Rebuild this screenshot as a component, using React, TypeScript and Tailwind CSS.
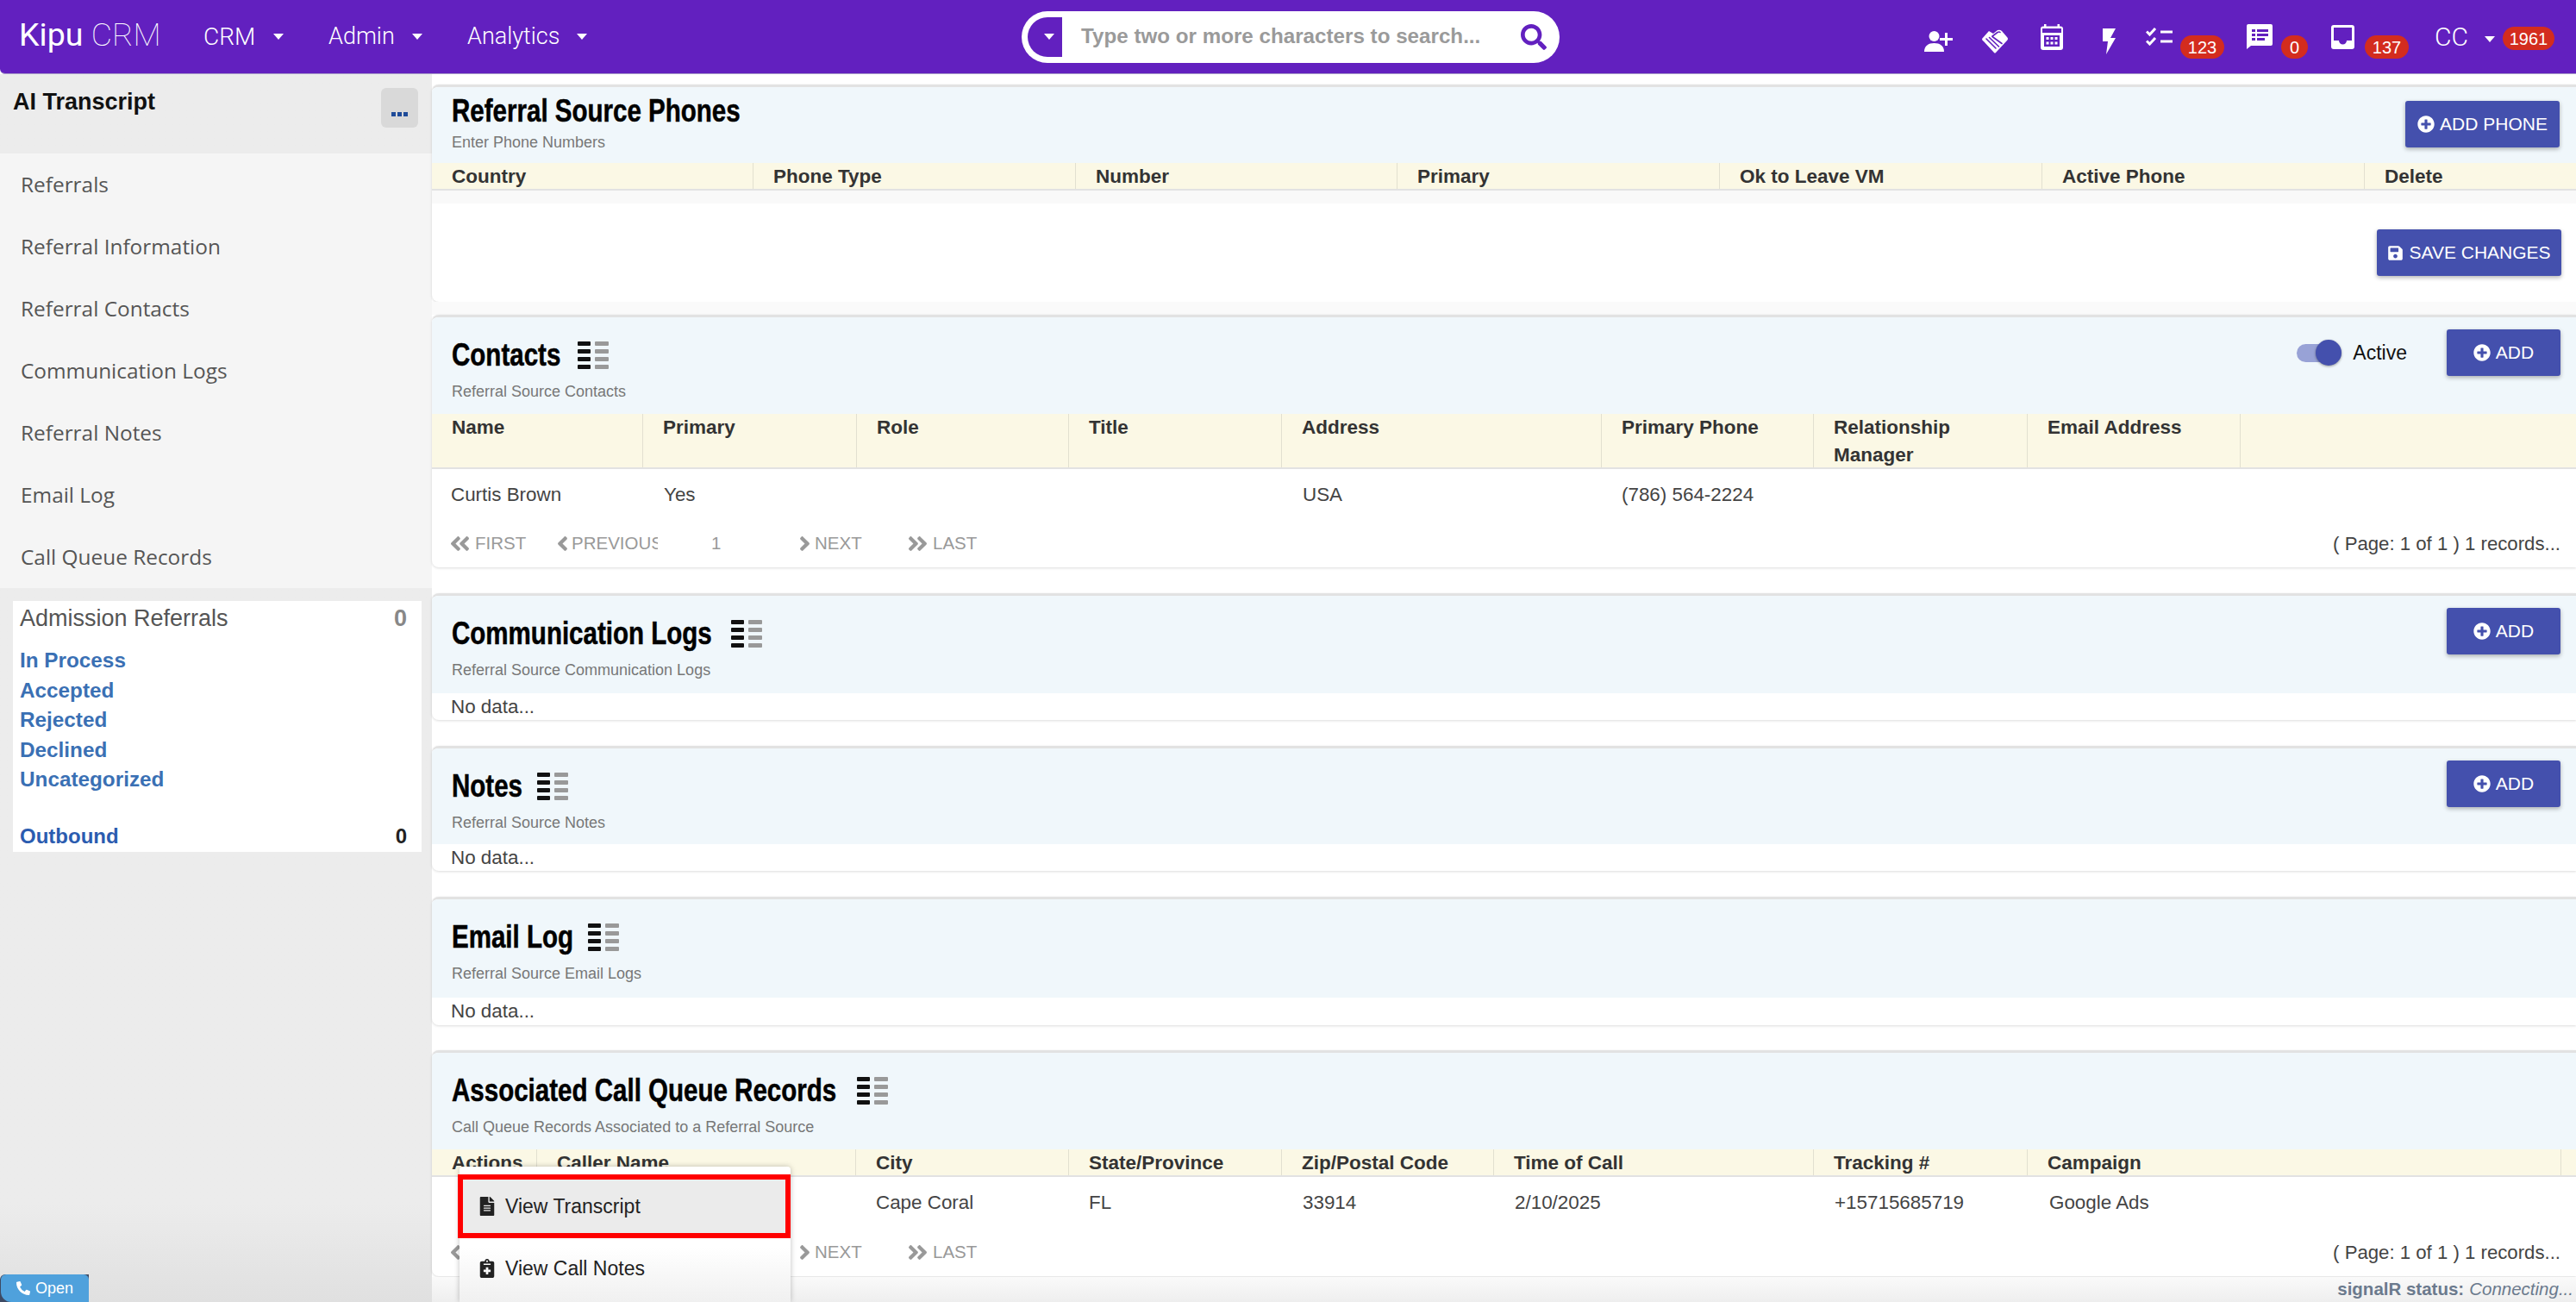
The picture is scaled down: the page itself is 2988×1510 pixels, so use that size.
import React from "react";
import {
  FaAngleDoubleLeft,
  FaAngleDoubleRight,
  FaAngleLeft,
  FaAngleRight,
  FaFileAlt,
  FaNotesMedical,
  FaPhoneAlt,
  FaPlusCircle,
  FaSave,
  FaSearch,
} from "react-icons/fa";

const Caret = () => (
  <span className="inline-block h-0 w-0 border-x-[6px] border-t-[7px] border-x-transparent border-t-white" />
);

const Badge = ({ text, className }: { text: string; className: string }) => (
  <span
    className={`flex h-[27px] items-center justify-center rounded-full bg-[#d32c1e] text-[20px] font-medium text-white ${className}`}
  >
    {text}
  </span>
);

const ListIcon = () => (
  <svg width="36" height="32" viewBox="0 0 36 32" className="ml-[17px]">
    {[0, 9, 18, 27].map((y) => (
      <g key={y}>
        <rect x="0" y={y} width="15" height="5" rx="1" fill="#111" />
        <rect x="20" y={y} width="16" height="5" rx="1" fill="#999" />
      </g>
    ))}
  </svg>
);

const AddButton = ({ label, className }: { label: string; className: string }) => (
  <button
    className={`flex h-[54px] items-center justify-center gap-[6px] rounded-[3px] bg-[#4450ad] text-[21px] font-medium text-white shadow-[0_2px_5px_rgba(0,0,0,0.3)] ${className}`}
  >
    <FaPlusCircle className="text-[20px]" />
    {label}
  </button>
);

const Pager = () => (
  <div className="flex h-[55px] items-center pr-[18px] pl-[22px] text-[20.5px] text-[#999]">
    <span className="flex w-[122px] items-center">
      <span className="w-[28px]">
        <FaAngleDoubleLeft className="-ml-[3px] text-[27px]" />
      </span>
      FIRST
    </span>
    <span className="flex w-[118px] items-center overflow-hidden whitespace-nowrap">
      <span className="w-[18px] shrink-0">
        <FaAngleLeft className="-ml-[6px] text-[27px]" />
      </span>
      PREVIOUS
    </span>
    <span className="ml-[62px] w-[100px]">1</span>
    <span className="flex w-[129px] items-center">
      <span className="w-[20px]">
        <FaAngleRight className="-ml-[5px] text-[27px]" />
      </span>
      NEXT
    </span>
    <span className="flex items-center">
      <span className="w-[28px]">
        <FaAngleDoubleRight className="-ml-[3px] text-[27px]" />
      </span>
      LAST
    </span>
    <span className="ml-auto text-[22.2px] text-[#444]">( Page: 1 of 1 ) 1 records...</span>
  </div>
);

const Panel = ({
  title,
  titleW,
  sub,
  right,
  list = true,
  children,
  className = "",
  headClass,
}: {
  title: string;
  titleW: string;
  sub: string;
  right?: React.ReactNode;
  list?: boolean;
  children: React.ReactNode;
  className?: string;
  headClass: string;
}) => (
  <section
    className={`overflow-hidden rounded-l-[8px] border-t-[3px] border-[#e2e2e2] bg-white shadow-[0_1px_3px_rgba(0,0,0,0.14)] ${className}`}
  >
    <div className={`relative bg-[#f0f7fb] pl-[23px] ${headClass}`}>
      <div className="flex items-center">
        <h2
          className={`h-[40px] shrink-0 text-[36px] leading-[40px] font-bold whitespace-nowrap text-black [-webkit-text-stroke:0.5px_black] ${titleW}`}
        >
          <span className="inline-block origin-left scale-x-[0.82]">{title}</span>
        </h2>
        {list && <ListIcon />}
      </div>
      <p className="mt-[11px] text-[18px] leading-[22px] text-[#777]">{sub}</p>
      {right}
    </div>
    {children}
  </section>
);

const Thead = ({
  cols,
  className = "h-[32px]",
}: {
  cols: { label: string; w: string }[];
  className?: string;
}) => (
  <div
    className={`flex border-b-2 border-[#e2e2e2] bg-[#fbf8e5] text-[22.5px] font-bold text-[#333] ${className}`}
  >
    {cols.map((c, i) => (
      <div
        key={i}
        className={`shrink-0 border-r border-[#e2e0d0] pl-[23px] leading-[32px] last:border-r-0 ${c.w}`}
      >
        {c.label}
      </div>
    ))}
  </div>
);

const phoneCols = [
  { label: "Country", w: "w-[373px]" },
  { label: "Phone Type", w: "w-[374px]" },
  { label: "Number", w: "w-[373px]" },
  { label: "Primary", w: "w-[374px]" },
  { label: "Ok to Leave VM", w: "w-[374px]" },
  { label: "Active Phone", w: "w-[374px]" },
  { label: "Delete", w: "flex-1" },
];

const contactCols = [
  { label: "Name", w: "w-[245px]" },
  { label: "Primary", w: "w-[248px]" },
  { label: "Role", w: "w-[246px]" },
  { label: "Title", w: "w-[247px]" },
  { label: "Address", w: "w-[371px]" },
  { label: "Primary Phone", w: "w-[246px]" },
  { label: "Relationship Manager", w: "w-[248px]" },
  { label: "Email Address", w: "w-[247px]" },
  { label: "", w: "flex-1" },
];

const queueCols = [
  { label: "Actions", w: "w-[122px]" },
  { label: "Caller Name", w: "w-[370px]" },
  { label: "City", w: "w-[247px]" },
  { label: "State/Province", w: "w-[247px]" },
  { label: "Zip/Postal Code", w: "w-[246px]" },
  { label: "Time of Call", w: "w-[371px]" },
  { label: "Tracking #", w: "w-[248px]" },
  { label: "Campaign", w: "w-[619px]" },
  { label: "", w: "flex-1" },
];

const navLinks = [
  "Referrals",
  "Referral Information",
  "Referral Contacts",
  "Communication Logs",
  "Referral Notes",
  "Email Log",
  "Call Queue Records",
];

const NoData = ({ className = "h-[31px]" }: { className?: string }) => (
  <div className={`flex items-center pl-[22px] text-[22.4px] text-[#444] ${className}`}>
    No data...
  </div>
);

const addPos = "absolute right-[18px] top-[14px]";

export default function App() {
  return (
    <div className="relative h-[1510px] w-[2988px] overflow-hidden bg-white font-['Liberation_Sans',sans-serif]">
      <header className="flex h-[86px] items-center rounded-bl-[6px] border-b border-[#a79ac8] bg-[#6220bf] text-white">
        <div className="w-[236px] pb-[3px] pl-[22px] font-['Roboto',sans-serif] text-[37.5px] leading-none">
          Kipu <span className="font-thin">CRM</span>
        </div>
        <div className="flex w-[145px] items-center gap-[21px] font-['Roboto',sans-serif] text-[28px] font-light">
          CRM <Caret />
        </div>
        <div className="flex w-[161px] items-center gap-[20px] font-['Roboto',sans-serif] text-[27px] font-light">
          Admin <Caret />
        </div>
        <div className="flex w-[643px] items-center gap-[20px] font-['Roboto',sans-serif] text-[27px] font-light">
          Analytics <Caret />
        </div>

        <div className="flex h-[60px] w-[624px] items-center rounded-full bg-white pr-[15px] pl-[7px]">
          <span className="flex h-[46px] w-[40px] items-center justify-center rounded-l-full rounded-r-[5px] bg-[#6220bf] pl-[10px]">
            <Caret />
          </span>
          <span className="ml-[22px] text-[24.2px] font-bold text-[#9a9a9a]">
            Type two or more characters to search...
          </span>
          <FaSearch className="ml-auto text-[30px] text-[#6220bf]" />
        </div>

        <div className="ml-[422px] flex h-full items-start">
          <svg width="34" height="24" viewBox="0 0 34 24" className="mt-[36px]" fill="white">
            <circle cx="12.5" cy="6" r="6" />
            <path d="M1 24c0-7 5-10 11.5-10S24 17 24 24z" />
            <path d="M25 2h3v6h6v3h-6v6h-3v-6h-6V8h6z" />
          </svg>
          <svg width="30" height="28" viewBox="0 0 30 28" className="mt-[34px] ml-[34px]">
            <path
              d="M0 11L8 2l5 3 5-4q3-1 5 1l6 7q2 2 0 4L16 27q-1 1-2 0L2 14q-2-1-2-3z"
              fill="white"
            />
            <g fill="none" stroke="#6220bf" strokeWidth="1.6" strokeLinecap="round">
              <path d="M5 11l11 11M8.5 9.5l11 10.5M12 8.5l11 8" />
              <path d="M12 8l6-4.5q2-1 3 0" />
            </g>
          </svg>
          <svg width="26" height="30" viewBox="0 0 26 30" className="mt-[28px] ml-[38px]" fill="white">
            <rect x="4" y="0" width="2.5" height="5" />
            <rect x="19.5" y="0" width="2.5" height="5" />
            <rect x="0" y="2.5" width="26" height="27.5" rx="3" />
            <rect x="2" y="5" width="22" height="5" fill="#6220bf" />
            <rect x="4" y="13" width="18" height="13" fill="#6220bf" />
            {[6.5, 11.5, 16.5].map((x) =>
              [15, 20.5].map((y) => <rect key={`${x}-${y}`} x={x} y={y} width="3" height="3" />)
            )}
          </svg>
          <svg width="16" height="30" viewBox="0 0 16 30" className="mt-[33px] ml-[45px]" fill="white">
            <polygon points="1,0 16,0 10,11 16,11 5,30 7,15 1,15" />
          </svg>
          <svg width="31" height="21" viewBox="0 0 31 21" className="mt-[32px] ml-[35px]" fill="none" stroke="white" strokeWidth="3">
            <path d="M1 4.5l3.5 3.5L11 1M1 15.5L4.5 19 11 12" />
            <path d="M17 5h14M17 16h14" />
          </svg>
          <Badge text="123" className="mt-[41px] ml-[9px] w-[51px]" />
          <svg width="30" height="29" viewBox="0 0 30 29" className="mt-[28px] ml-[26px]">
            <path d="M2 0h26a2 2 0 0 1 2 2v21a2 2 0 0 1-2 2H5l-5 4V2a2 2 0 0 1 2-2z" fill="white" />
            <g fill="#6220bf">
              <rect x="6" y="6" width="4" height="3" />
              <rect x="12" y="6" width="13" height="3" />
              <rect x="6" y="11" width="4" height="3" />
              <rect x="12" y="11" width="13" height="3" />
              <rect x="6" y="16" width="4" height="3" />
              <rect x="12" y="16" width="9" height="3" />
            </g>
          </svg>
          <Badge text="0" className="mt-[41px] ml-[10px] w-[31px]" />
          <svg width="27" height="28" viewBox="0 0 27 28" className="mt-[29px] ml-[27px]">
            <rect width="27" height="28" rx="3" fill="white" />
            <path d="M3 3h21v15h-6a4.5 4.5 0 0 1-9 0H3z" fill="#6220bf" />
          </svg>
          <Badge text="137" className="mt-[41px] ml-[12px] w-[51px]" />
          <span className="mt-[25px] ml-[30px] font-['Roboto',sans-serif] text-[30px] leading-[36px] font-light">
            CC
          </span>
          <span className="mt-[42px] ml-[19px] flex">
            <Caret />
          </span>
          <Badge text="1961" className="mt-[31px] ml-[9px] w-[60px]" />
        </div>
      </header>

      <div className="flex h-[1424px]">
        <aside className="flex w-[501px] shrink-0 flex-col bg-gradient-to-b from-[#ececec] from-[92%] to-[#e0e0e0]">
          <div className="flex h-[92px] items-start justify-between pr-[16px] pl-[15px]">
            <span className="mt-[15px] text-[27px] leading-[34px] font-bold text-[#111]">
              AI Transcript
            </span>
            <button className="mt-[16px] flex h-[46px] w-[43px] items-end justify-center gap-[2px] rounded-[6px] bg-[#d9d9d9] pb-[13px]">
              <span className="h-[5px] w-[5px] bg-[#1f4b99]" />
              <span className="h-[5px] w-[5px] bg-[#1f4b99]" />
              <span className="h-[5px] w-[5px] bg-[#1f4b99]" />
            </button>
          </div>
          <nav className="bg-[#f5f5f5]">
            {navLinks.map((l) => (
              <div
                key={l}
                className="flex h-[72px] items-center pl-[24px] font-['Open_Sans',sans-serif] text-[24.4px] text-[#555]"
              >
                {l}
              </div>
            ))}
          </nav>
          <div className="mt-[15px] ml-[15px] h-[291px] w-[474px] bg-white pt-[5px] pr-[17px] pl-[8px]">
            <div className="flex h-[30px] items-center justify-between text-[27px] font-light text-[#555]">
              Admission Referrals
              <span className="font-bold text-[#888]">0</span>
            </div>
            <div className="mt-[17px] flex flex-col text-[24.3px] leading-[34.5px] font-bold text-[#3a70b4]">
              <a>In Process</a>
              <a>Accepted</a>
              <a>Rejected</a>
              <a>Declined</a>
              <a>Uncategorized</a>
            </div>
            <div className="mt-[31px] flex justify-between text-[24px] leading-[34px] font-bold text-[#2b5cb0]">
              Outbound
              <span className="text-[#222]">0</span>
            </div>
          </div>
        </aside>

        <main className="flex min-w-0 flex-1 flex-col pt-[12px]">
          <Panel
            title="Referral Source Phones"
            titleW="w-[334px]"
            sub="Enter Phone Numbers"
            list={false}
            headClass="h-[88px] pt-[8px] [&>p]:mt-[5px]"
            right={
              <div className="absolute top-[16px] right-[19px]">
                <AddButton label="ADD PHONE" className="w-[179px]" />
              </div>
            }
          >
            <Thead cols={phoneCols} />
            <div className="h-[15px] bg-[#f9f9f9]" />
            <div className="flex h-[114px] items-start justify-end pt-[30px] pr-[17px]">
              <button className="flex h-[54px] w-[214px] items-center justify-center gap-[6px] rounded-[3px] bg-[#4450ad] text-[21px] font-medium text-white shadow-[0_2px_5px_rgba(0,0,0,0.3)]">
                <FaSave className="text-[19px]" />
                SAVE CHANGES
              </button>
            </div>
          </Panel>
          <div className="h-[15px] bg-[#fafafa]" />

          <Panel
            title="Contacts"
            titleW="w-[129px]"
            sub="Referral Source Contacts"
            headClass="h-[112px] pt-[24px]"
            right={
              <div className="absolute top-[14px] right-[18px] flex items-center">
                <span className="relative flex h-[30px] w-[52px] items-center">
                  <span className="h-[21px] w-full rounded-full bg-[#98a2d6]" />
                  <span className="absolute right-0 h-[30px] w-[30px] rounded-full bg-[#4450ad] shadow-[0_1px_3px_rgba(0,0,0,0.4)]" />
                </span>
                <span className="ml-[13px] text-[23px] text-[#111]">Active</span>
                <span className="ml-[46px]">
                  <AddButton label="ADD" className="w-[132px]" />
                </span>
              </div>
            }
          >
            <Thead className="h-[64px]" cols={contactCols} />
            <div className="flex h-[59px] items-center text-[22.4px] text-[#444]">
              <span className="w-[269px] pl-[22px]">Curtis Brown</span>
              <span className="w-[741px]">Yes</span>
              <span className="w-[370px]">USA</span>
              <span>(786) 564-2224</span>
            </div>
            <Pager />
          </Panel>

          <Panel
            className="mt-[30px]"
            title="Communication Logs"
            titleW="w-[307px]"
            sub="Referral Source Communication Logs"
            headClass="h-[113px] pt-[24px]"
            right={
              <div className={addPos}>
                <AddButton label="ADD" className="w-[132px]" />
              </div>
            }
          >
            <NoData />
          </Panel>

          <Panel
            className="mt-[30px]"
            title="Notes"
            titleW="w-[82px]"
            sub="Referral Source Notes"
            headClass="h-[111px] pt-[24px]"
            right={
              <div className={addPos}>
                <AddButton label="ADD" className="w-[132px]" />
              </div>
            }
          >
            <NoData />
          </Panel>

          <Panel
            className="mt-[30px]"
            title="Email Log"
            titleW="w-[141px]"
            sub="Referral Source Email Logs"
            headClass="h-[114px] pt-[24px]"
          >
            <NoData className="h-[32px]" />
          </Panel>

          <Panel
            className="mt-[29px]"
            title="Associated Call Queue Records"
            titleW="w-[453px]"
            sub="Call Queue Records Associated to a Referral Source"
            headClass="h-[112px] pt-[24px]"
          >
            <Thead cols={queueCols} />
            <div className="flex h-[60px] items-center pl-[515px] text-[22.4px] text-[#444]">
              <span className="w-[247px]">Cape Coral</span>
              <span className="w-[248px]">FL</span>
              <span className="w-[246px]">33914</span>
              <span className="w-[371px]">2/10/2025</span>
              <span className="w-[249px]">+15715685719</span>
              <span>Google Ads</span>
            </div>
            <Pager />
          </Panel>

          <footer className="mt-auto flex h-[29px] items-center justify-end bg-gradient-to-b from-[#fafafa] to-[#eeeeee] pr-[3px] text-[20.5px] text-[#6b7a8d]">
            <b>signalR status:</b>
            <i className="ml-[6px]">Connecting...</i>
          </footer>
        </main>
      </div>

      <div className="absolute top-[1353px] left-[533px] h-[157px] w-[384px] rounded-t-[4px] bg-gradient-to-b from-white from-[60%] to-[#f0f0f0] pt-[9px] text-[23px] text-[#222] shadow-[0_0_6px_rgba(0,0,0,0.25)]">
        <div className="-ml-[2px] flex h-[74px] items-center gap-[10px] border-[6px] border-[#ff0000] bg-[#ebebeb] pl-[17px]">
          <FaFileAlt className="text-[22px]" />
          View Transcript
        </div>
        <div className="flex h-[70px] items-center gap-[10px] pl-[21px]">
          <FaNotesMedical className="text-[22px]" />
          View Call Notes
        </div>
      </div>

      <div className="absolute bottom-0 left-0 rounded-tl-[6px] bg-[#3d4a63] pl-[1px]">
        <div className="flex h-[32px] w-[102px] items-center justify-center gap-[6px] rounded-t-[6px] rounded-bl-[12px] bg-[#4fa1dc] text-[18px] text-white">
          <FaPhoneAlt className="text-[16px]" />
          Open
        </div>
      </div>
    </div>
  );
}
